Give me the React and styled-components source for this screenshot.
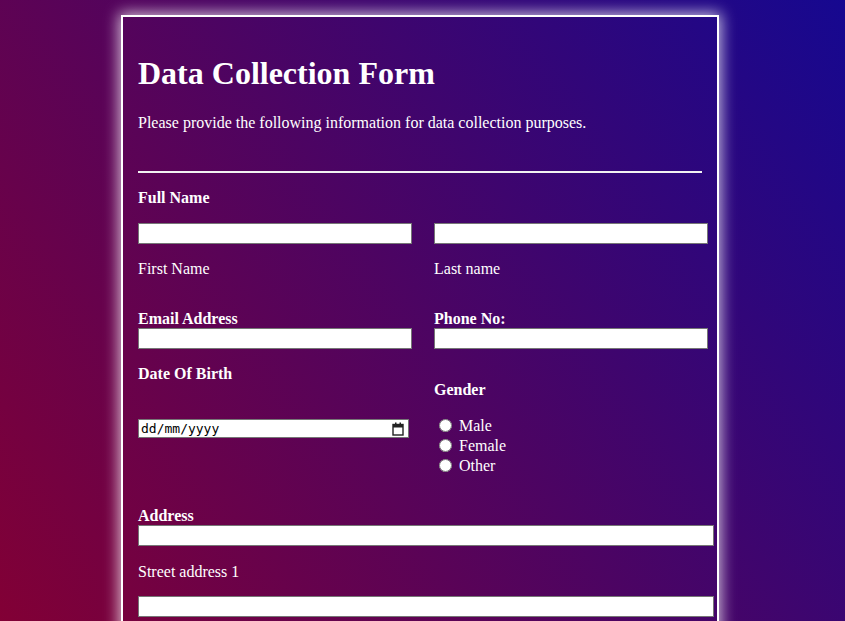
import React from 'react'
import styled, { createGlobalStyle } from 'styled-components'

const GlobalStyle = createGlobalStyle`
  html {
    min-height: 100%;
    background: linear-gradient(55deg, #820035, #160890) fixed;
  }
  body {
    margin: 0;
    padding-right: 5px;
    color: #fff;
    font-family: "Liberation Serif", "Times New Roman", serif;
    font-size: 16px;
  }
`;

const Card = styled.div`
  box-sizing: border-box;
  width: 598px;
  margin: 15px auto 0;
  padding: 15px 15px 40px;
  border: 2px solid #fff;
  box-shadow: 0 0 14px 2px rgba(255, 255, 255, 0.75);
`;

const Title = styled.h1`
  font-size: 32px;
  margin: 23px 0 0;
`;

const Intro = styled.p`
  margin: 22px 0 0;
`;

const Divider = styled.hr`
  margin: 39px 0 0;
  border: none;
  height: 2px;
  background: #f2f2f2;
`;

const Row = styled.div`
  display: grid;
  grid-template-columns: 274px 274px;
  column-gap: 22px;
  margin-top: ${(p) => p.top || 0}px;
`;

const Field = styled.div`
  display: flex;
  flex-direction: column;
  align-items: flex-start;
`;

const Label = styled.label`
  display: block;
  font-weight: bold;
  margin-top: ${(p) => p.top || 0}px;
`;

const SubLabel = styled.label`
  display: block;
  margin-top: ${(p) => p.top || 0}px;
`;

const TextInput = styled.input`
  box-sizing: border-box;
  width: ${(p) => p.w}px;
  height: 21px;
  margin: ${(p) => p.top || 0}px 0 0;
  padding: 1px 2px;
  border: 1px solid #767676;
  background: #fff;
`;

const DateBox = styled.div`
  box-sizing: border-box;
  display: flex;
  align-items: center;
  justify-content: space-between;
  width: 271px;
  height: 19px;
  margin-top: 36px;
  padding: 0 4px 0 2px;
  border: 1px solid #767676;
  background: #fff;
  color: #000;
  font-family: "DejaVu Sans Mono", monospace;
  font-size: 13px;
`;

const CalendarIcon = () => (
  <svg width="12" height="14" viewBox="0 0 12 14" aria-hidden="true">
    <rect x="1" y="2.5" width="10" height="10.5" fill="none" stroke="#222" strokeWidth="1.4" />
    <rect x="1" y="2.5" width="10" height="3" fill="#222" />
    <rect x="3" y="0.5" width="1.5" height="2.5" fill="#222" />
    <rect x="7.5" y="0.5" width="1.5" height="2.5" fill="#222" />
  </svg>
);

const RadioGroup = styled.div`
  margin-top: 17px;
`;

const RadioRow = styled.label`
  display: block;
  height: 20px;
  line-height: 20px;
`;

const Radio = styled.input`
  margin: 3px 3px 0 5px;
  vertical-align: -1px;
`;

export default function App() {
  return (
    <>
      <GlobalStyle />
      <Card>
        <Title>Data Collection Form</Title>
        <Intro>Please provide the following information for data collection purposes.</Intro>
        <Divider />

        <Label top={16}>Full Name</Label>
        <Row top={16}>
          <Field>
            <TextInput w={274} type="text" />
            <SubLabel top={16}>First Name</SubLabel>
          </Field>
          <Field>
            <TextInput w={274} type="text" />
            <SubLabel top={16}>Last name</SubLabel>
          </Field>
        </Row>

        <Row top={32}>
          <Field>
            <Label>Email Address</Label>
            <TextInput w={274} type="email" />
          </Field>
          <Field>
            <Label>Phone No:</Label>
            <TextInput w={274} type="tel" />
          </Field>
        </Row>

        <Row top={16}>
          <Field>
            <Label>Date Of Birth</Label>
            <DateBox>
              <span>dd/mm/yyyy</span>
              <CalendarIcon />
            </DateBox>
          </Field>
          <Field>
            <Label top={16}>Gender</Label>
            <RadioGroup>
              <RadioRow><Radio type="radio" name="gender" /> Male</RadioRow>
              <RadioRow><Radio type="radio" name="gender" /> Female</RadioRow>
              <RadioRow><Radio type="radio" name="gender" /> Other</RadioRow>
            </RadioGroup>
          </Field>
        </Row>

        <Label top={31}>Address</Label>
        <TextInput w={576} type="text" />
        <SubLabel top={17}>Street address 1</SubLabel>
        <TextInput w={576} top={15} type="text" />
      </Card>
    </>
  )
}
